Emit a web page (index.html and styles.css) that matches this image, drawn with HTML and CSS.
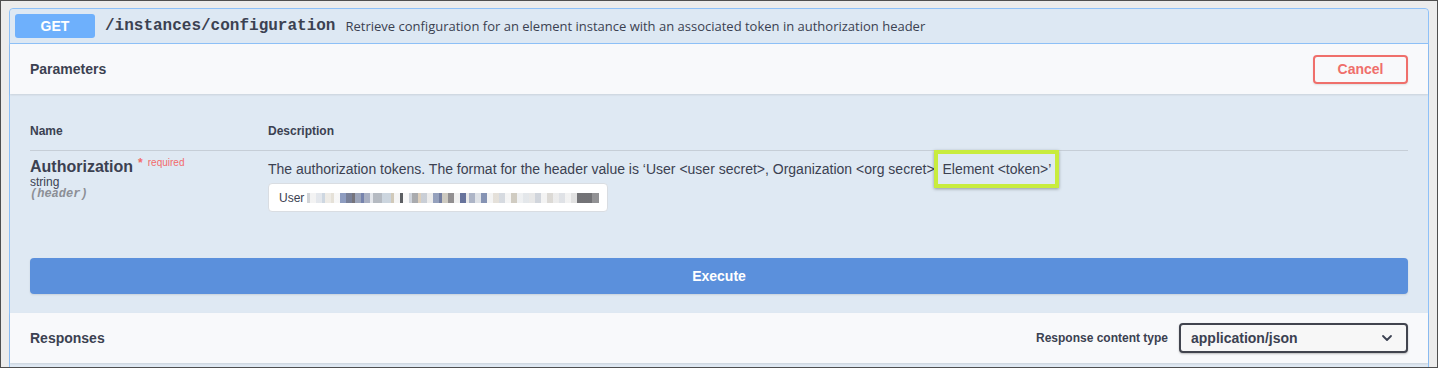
FILE: index.html
```html
<!DOCTYPE html>
<html lang="en">
<head>
<meta charset="utf-8">
<title>GET /instances/configuration</title>
<link rel="stylesheet" href="styles.css">
</head>
<body>
<div class="frame">
  <div class="opblock">
    <div class="opblock-summary">
      <span class="method">GET</span>
      <span class="path">/instances/configuration</span>
      <span class="summary-desc">Retrieve configuration for an element instance with an associated token in authorization header</span>
    </div>
    <div class="section-header">
      <h4 class="section-title">Parameters</h4>
      <button class="btn-cancel">Cancel</button>
    </div>
    <div class="params-body">
      <table class="params">
        <thead>
          <tr>
            <th class="col-name">Name</th>
            <th class="col-desc">Description</th>
          </tr>
        </thead>
        <tbody>
          <tr>
            <td class="cell-name">
              <div class="param-name">Authorization<span class="req-star">*</span><span class="req-label">required</span></div>
              <div class="param-type">string</div>
              <div class="param-in">(header)</div>
            </td>
            <td class="cell-desc">
              <div class="param-desc">The authorization tokens. The format for the header value is ‘User &lt;user secret&gt;, Organization &lt;org secret&gt;, <span class="hl">Element &lt;token&gt;’</span></div>
              <div class="token-input"><span class="token-user">User</span><span class="token-blur"></span></div>
            </td>
          </tr>
        </tbody>
      </table>
      <div class="execute-wrapper">
        <button class="btn-execute">Execute</button>
      </div>
    </div>
    <div class="section-header">
      <h4 class="section-title">Responses</h4>
      <div class="content-type">
        <span class="content-type-label">Response content type</span>
        <div class="select">
          <span>application/json</span>
          <svg class="chevron" width="12" height="8" viewBox="0 0 12 8"><path d="M2 2 L6 6 L10 2" fill="none" stroke="#3b4151" stroke-width="1.8" stroke-linecap="round" stroke-linejoin="round"/></svg>
        </div>
      </div>
    </div>
    <div class="responses-body"></div>
  </div>
</div>
</body>
</html>
```
FILE: styles.css
```css
* { box-sizing: border-box; }
html, body { margin: 0; padding: 0; }
body { font-family: "Liberation Sans", Arial, sans-serif; color: #3b4151; }

.frame {
  width: 1438px;
  height: 368px;
  border: 1px solid #4f4f4f;
  background: #ececec;
  padding: 7px 8px 0 8px;
  overflow: hidden;
}

.opblock {
  border: 1px solid #8ec1f8;
  border-radius: 4px;
  background: #dfe9f3;
  height: 400px;
}

.opblock-summary {
  display: flex;
  align-items: center;
  height: 35px;
  padding: 0 5px;
  border-bottom: 1px solid #8ec1f8;
  background: #dde8f3;
  border-radius: 4px 4px 0 0;
}

.method {
  width: 80px;
  height: 24px;
  border-radius: 3px;
  background: #6eb0fc;
  color: #fff;
  font-weight: bold;
  font-size: 14px;
  display: flex;
  align-items: center;
  justify-content: center;
}

.path {
  font-family: "Liberation Mono", "Courier New", monospace;
  font-weight: bold;
  font-size: 16px;
  margin-left: 10px;
  color: #3b4151;
}

.summary-desc {
  font-family: "Open Sans", sans-serif;
  font-size: 13px;
  margin-left: 10px;
  color: #3b4151;
}

.section-header {
  height: 50px;
  padding: 0 20px;
  display: flex;
  align-items: center;
  justify-content: space-between;
  background: #f8f9fb;
  box-shadow: 0 1px 2px rgba(0, 0, 0, 0.1);
  position: relative;
}

.section-title {
  margin: 0;
  font-size: 14px;
  font-weight: bold;
  color: #3b4151;
}

.btn-cancel {
  width: 95px;
  height: 29px;
  border: 2px solid #ef6f6b;
  border-radius: 4px;
  background: transparent;
  color: #ef6f6b;
  font-family: "Liberation Sans", Arial, sans-serif;
  font-weight: bold;
  font-size: 14px;
  box-shadow: 0 1px 2px rgba(0, 0, 0, 0.1);
}

.params-body {
  padding: 20px 20px 0;
}

.params {
  width: 100%;
  border-collapse: collapse;
}

.params th {
  text-align: left;
  font-size: 12px;
  font-weight: bold;
  line-height: 14px;
  padding: 10px 0 12px;
  border-bottom: 1px solid #c6ced7;
}

.col-name { width: 238px; }

.params td {
  vertical-align: top;
  padding: 0;
}

.params td.cell-name { padding-top: 9px; }
.params td.cell-desc { padding-top: 9px; }

.param-name {
  font-size: 16px;
  font-weight: bold;
  line-height: 14px;
}

.req-star {
  color: #f26b6b;
  font-size: 12px;
  position: relative;
  top: -5px;
  margin-left: 5px;
}

.req-label {
  color: #f26b6b;
  font-size: 10px;
  font-weight: normal;
  position: relative;
  top: -6px;
  margin-left: 5px;
}

.param-type {
  font-size: 12px;
  line-height: 10px;
  padding-top: 1px;
}

.param-in {
  font-family: "Liberation Mono", "Courier New", monospace;
  font-size: 12px;
  font-style: italic;
  font-weight: bold;
  color: #8c8f96;
  line-height: 14px;
}

.param-desc {
  font-size: 14px;
  line-height: 18px;
}

.hl { position: relative; }
.hl::after {
  content: "";
  position: absolute;
  left: -8px;
  right: -8px;
  top: -11px;
  bottom: -11px;
  border: 4px solid #c8ec3e;
  box-shadow: 0 1px 3px rgba(0, 0, 0, 0.35);
}

.token-input {
  margin-top: 5px;
  width: 340px;
  height: 29px;
  background: #fff;
  border: 1px solid #d9dde2;
  border-radius: 4px;
  display: flex;
  align-items: center;
  padding-left: 10px;
  font-size: 12px;
}

.token-user { margin-right: 3px; }

.token-blur {
  display: block;
  width: 292px;
  height: 10px;
  opacity: 0.85;
  background: linear-gradient(to right,
    #c9ccd0 0 3px, #f1f1f1 3px 9px, #dfe3e9 9px 15px, #c5d0dc 15px 18px, #ebe8e2 18px 24px, #e1dcd1 24px 27px, #f6f6f6 27px 33px,
    #7a8bb5 33px 39px, #616a86 39px 45px, #5d5b64 45px 48px, #8b95ae 48px 54px, #5e6d9e 54px 57px, #9aa2b8 57px 63px,
    #dfe2e8 63px 66px, #a8aeb7 66px 75px, #c3ced9 75px 84px, #c9c0ad 84px 87px, #f3f3f3 87px 93px, #3f4247 93px 96px,
    #f7f7f7 96px 102px, #c6ccd6 102px 105px, #9a9ca0 105px 111px, #d7c7b1 111px 114px, #c0c6cf 114px 120px, #e8e8e8 120px 126px,
    #8290b1 126px 132px, #5c6890 132px 135px, #c4c0b5 135px 141px, #7e7b7d 141px 147px, #ededed 147px 153px, #4c5a8a 153px 159px,
    #e5e5e5 159px 162px, #9fa8bd 162px 168px, #d9dde3 168px 174px, #7080a6 174px 180px, #f2f2f2 180px 186px, #e0dbd3 186px 192px,
    #cfd4db 192px 198px, #f3f3f3 198px 204px, #c8c3b7 204px 210px, #eceef0 210px 216px, #dfe3e7 216px 222px, #e4e4e4 222px 228px,
    #c9ced6 228px 234px, #f1f1f1 234px 240px, #d6d3ce 240px 246px, #e9e9e9 246px 252px, #dadde2 252px 258px, #f0f0f0 258px 264px,
    #dcdcdc 264px 270px, #5a5a5e 270px 285px, #7f7f82 285px 292px);
}

.execute-wrapper {
  padding: 46px 0 19px;
}

.btn-execute {
  display: block;
  width: 100%;
  height: 36px;
  border: none;
  border-radius: 4px;
  background: #5b90dc;
  color: #fff;
  font-family: "Liberation Sans", Arial, sans-serif;
  font-weight: bold;
  font-size: 14px;
  box-shadow: 0 1px 2px rgba(0, 0, 0, 0.1);
}

.content-type {
  display: flex;
  align-items: center;
}

.content-type-label {
  font-size: 12px;
  font-weight: bold;
  margin-right: 11px;
}

.select {
  width: 229px;
  height: 30px;
  border: 2px solid #41444e;
  border-radius: 4px;
  background: #f7f7f7;
  box-shadow: 0 1px 2px rgba(0, 0, 0, 0.25);
  display: flex;
  align-items: center;
  justify-content: space-between;
  padding: 0 13px 0 10px;
  font-size: 14px;
  font-weight: bold;
  color: #3b4151;
}

.chevron { display: block; }

.responses-body {
  height: 60px;
}
```
